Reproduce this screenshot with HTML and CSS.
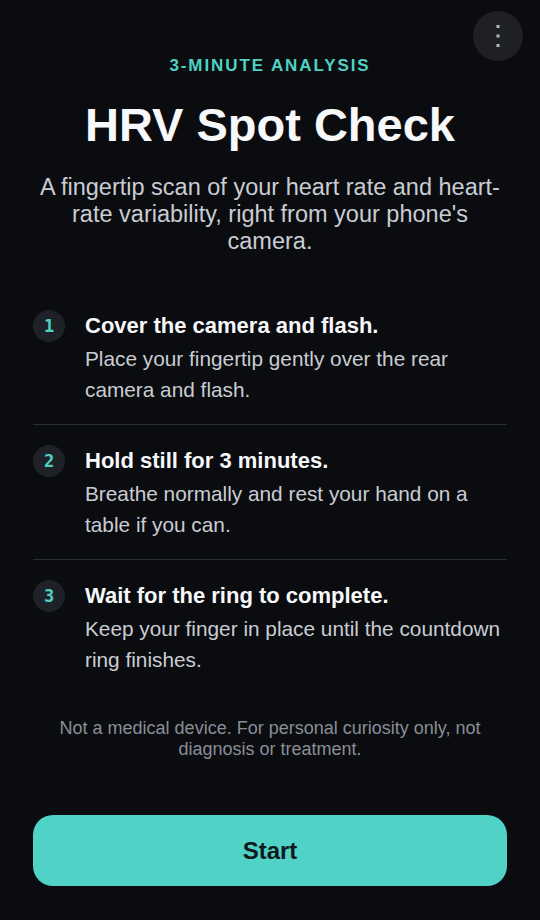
FILE: index.html
```html
<!DOCTYPE html>
<html lang="en">
<head>
<meta charset="utf-8">
<title>HRV Spot Check</title>
<link rel="stylesheet" href="styles.css">
</head>
<body>
<main class="screen">
  <button class="menu-btn" aria-label="More options">
    <svg width="50" height="50" viewBox="0 0 50 50"><rect x="23.5" y="23.5" width="3" height="3" fill="#b4b8c0"/><rect x="23.5" y="14" width="3" height="3" fill="#b4b8c0"/><rect x="23.5" y="33" width="3" height="3" fill="#b4b8c0"/></svg>
  </button>
  <header class="intro">
    <p class="eyebrow">3-MINUTE ANALYSIS</p>
    <h1 class="title">HRV Spot Check</h1>
    <p class="subtitle">A fingertip scan of your heart rate and heart-rate variability, right from your phone's camera.</p>
  </header>
  <ol class="steps">
    <li class="step">
      <span class="step-num">1</span>
      <div class="step-body">
        <h2 class="step-title">Cover the camera and flash.</h2>
        <p class="step-desc">Place your fingertip gently over the rear camera and flash.</p>
      </div>
    </li>
    <li class="step">
      <span class="step-num">2</span>
      <div class="step-body">
        <h2 class="step-title">Hold still for 3 minutes.</h2>
        <p class="step-desc">Breathe normally and rest your hand on a table if you can.</p>
      </div>
    </li>
    <li class="step">
      <span class="step-num">3</span>
      <div class="step-body">
        <h2 class="step-title">Wait for the ring to complete.</h2>
        <p class="step-desc">Keep your finger in place until the countdown ring finishes.</p>
      </div>
    </li>
  </ol>
  <p class="disclaimer">Not a medical device. For personal curiosity only, not diagnosis or treatment.</p>
  <button class="start-btn">Start</button>
</main>
</body>
</html>
```
FILE: styles.css
```css
* { box-sizing: border-box; }
html, body {
  margin: 0;
  padding: 0;
  background: #0b0c10;
}
body {
  font-family: "Liberation Sans", Arial, sans-serif;
  color: #f5f6f8;
}
.screen {
  position: relative;
  min-height: 920px;
  padding: 56px 33px 34px;
  display: flex;
  flex-direction: column;
}
.menu-btn {
  position: absolute;
  top: 11px;
  right: 17px;
  width: 50px;
  height: 50px;
  padding: 0;
  border: none;
  border-radius: 50%;
  background: #1f2024;
  display: flex;
  align-items: center;
  justify-content: center;
}
.menu-btn svg { display: block; }
.intro { text-align: center; }
.eyebrow {
  margin: 0;
  font-size: 17px;
  line-height: 20px;
  font-weight: 700;
  letter-spacing: 1.9px;
  color: #4fd1c5;
}
.title {
  margin: 21px 0 0;
  font-size: 47px;
  line-height: 56px;
  font-weight: 700;
  color: #f7f8fa;
}
.subtitle {
  margin: 21px 0 0;
  font-size: 23.5px;
  line-height: 27px;
  color: #c9ccd3;
}
.steps {
  list-style: none;
  margin: 35px 0 0;
  padding: 0;
}
.step {
  display: flex;
  align-items: flex-start;
  gap: 20px;
  padding: 22px 0 19px;
  border-bottom: 1px solid #2a2d33;
}
.step:last-child { border-bottom: none; }
.step-num {
  flex: none;
  width: 32px;
  height: 32px;
  margin-top: -2px;
  border-radius: 50%;
  background: #1e2127;
  color: #4fd1c5;
  font-family: "DejaVu Sans Mono", monospace;
  font-size: 17px;
  font-weight: 700;
  display: flex;
  align-items: center;
  justify-content: center;
}
.step-body { flex: 1; min-width: 0; }
.step-title {
  margin: 0;
  font-size: 22px;
  line-height: 28px;
  font-weight: 700;
  color: #f7f8fa;
}
.step-desc {
  margin: 3px 0 0;
  font-size: 20.8px;
  line-height: 31px;
  color: #c9ccd3;
}
.disclaimer {
  margin: 24px 0 0;
  text-align: center;
  font-size: 18px;
  line-height: 21px;
  color: #8a8e97;
}
.start-btn {
  margin-top: auto;
  height: 71px;
  width: 100%;
  border: none;
  border-radius: 20px;
  background: #50d2c6;
  color: #0e1a1d;
  font-family: "Liberation Sans", Arial, sans-serif;
  font-size: 24px;
  font-weight: 700;
}
```
